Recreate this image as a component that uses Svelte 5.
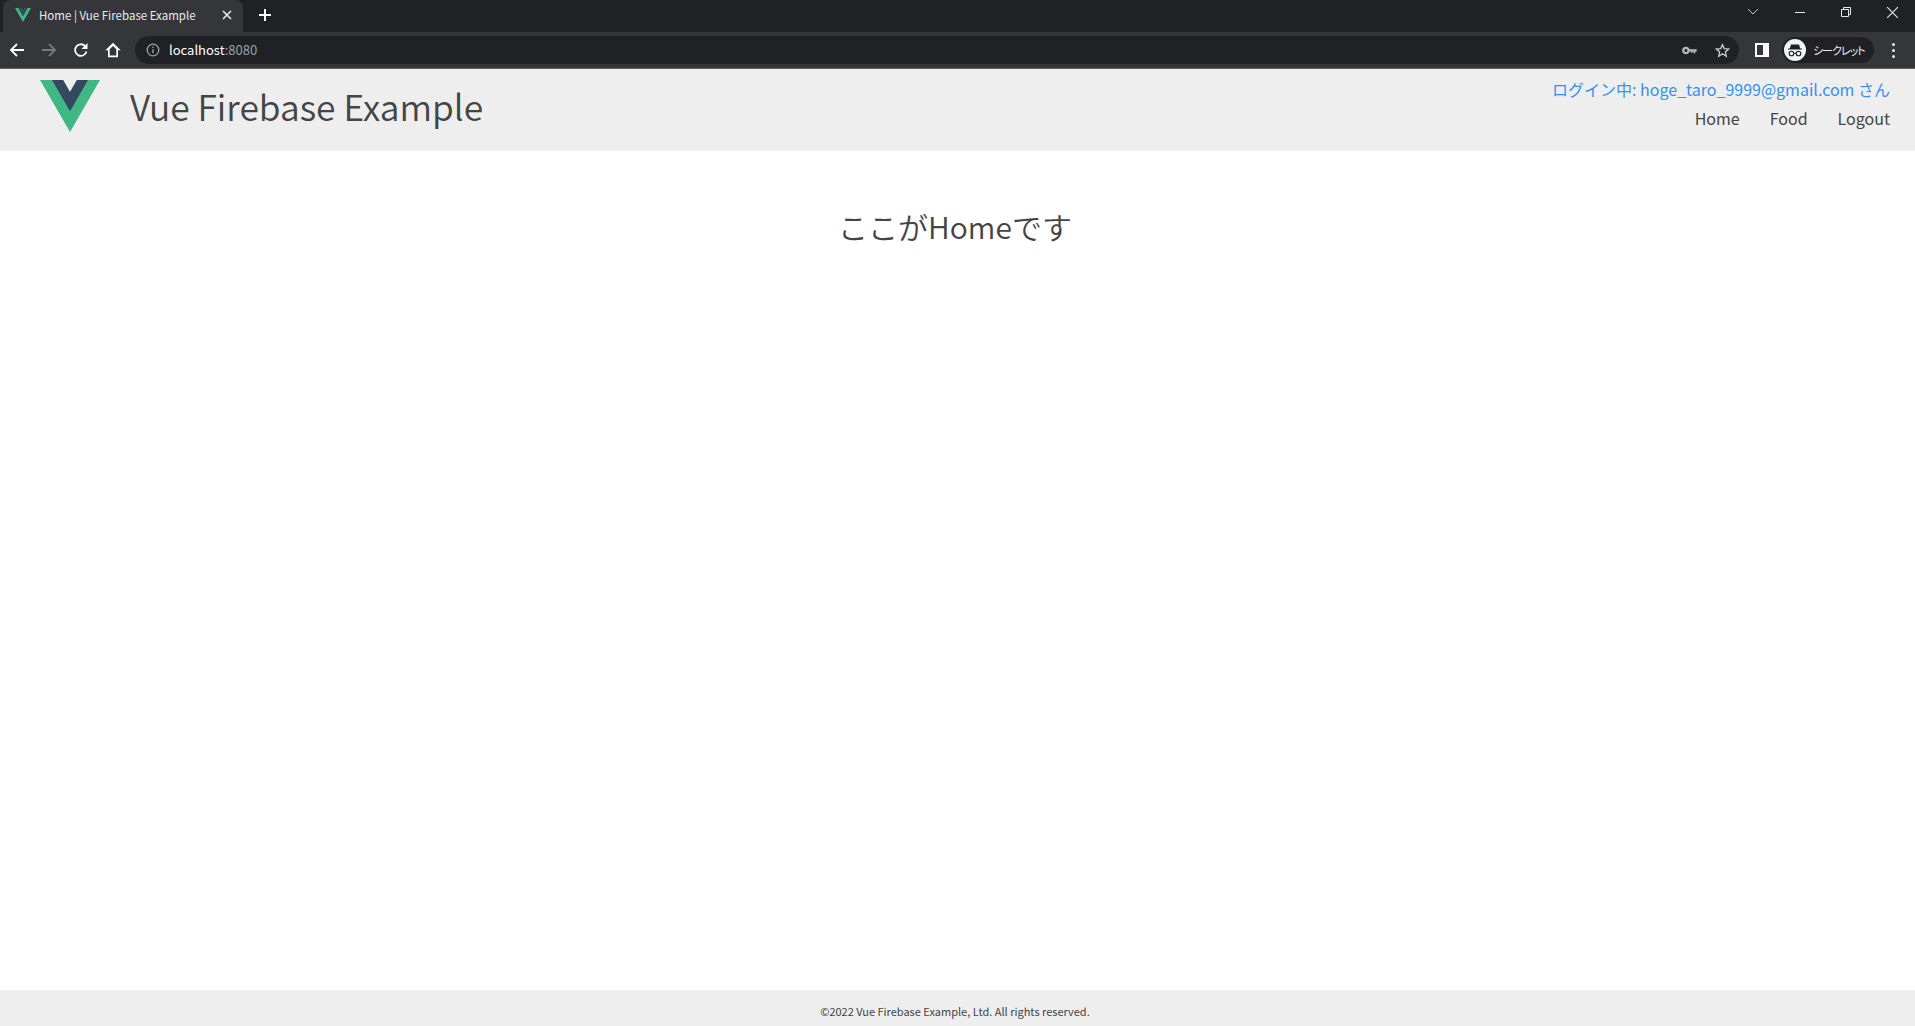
<script>
  const links = ["Home", "Food", "Logout"];
  const userEmail = "hoge_taro_9999@gmail.com";
</script>

<div class="page">
  <!-- browser chrome -->
  <div class="tabstrip">
    <div class="tab">
      <svg class="favicon" viewBox="0 0 261.76 226.69" width="16" height="14">
        <path fill="#41b883" d="M161.096.001l-30.225 52.351L100.647.001H-.005l130.877 226.688L261.749.001z" />
        <path fill="#34495e" d="M161.096.001l-30.225 52.351L100.647.001H52.346l78.526 136.01L209.398.001z" />
      </svg>
      <span class="tab-title">Home | Vue Firebase Example</span>
      <svg class="tab-close" viewBox="0 0 10 10" width="10" height="10">
        <path d="M1 1l8 8M9 1l-8 8" stroke="#e8eaed" stroke-width="1.6" fill="none" />
      </svg>
    </div>
    <svg class="newtab" viewBox="0 0 12 12" width="12" height="12">
      <path d="M6 0v12M0 6h12" stroke="#fff" stroke-width="2" fill="none" />
    </svg>
    <div class="winbtns">
      <svg viewBox="0 0 12 8" width="12" height="8"><path d="M1 1l5 5 5-5" stroke="#c4c7c9" fill="none" /></svg>
      <svg viewBox="0 0 10 10" width="10" height="10"><path d="M0 5.5h10" stroke="#e8eaed" fill="none" /></svg>
      <svg viewBox="0 0 10 10" width="10" height="10"><path d="M.5 2.5h7v7h-7zM2.5 2.5v-2h7v7h-2" stroke="#e8eaed" fill="none" /></svg>
      <svg viewBox="0 0 10 10" width="11" height="11"><path d="M0 0l10 10M10 0L0 10" stroke="#e8eaed" stroke-width="1" fill="none" /></svg>
    </div>
  </div>
  <div class="toolbar">
    <div class="navbtns">
      <svg viewBox="0 0 16 16" width="16" height="16"><path d="M15 8H2M8 2L2 8l6 6" stroke="#fff" stroke-width="1.8" fill="none" /></svg>
      <svg viewBox="0 0 16 16" width="16" height="16"><path d="M1 8h13M8 2l6 6-6 6" stroke="#77797c" stroke-width="1.8" fill="none" /></svg>
      <svg viewBox="0 0 16 16" width="16" height="16"><path d="M13.5 9.5A5.8 5.8 0 1 1 12 4" stroke="#fff" stroke-width="1.8" fill="none" /><path d="M14.5 1v6h-6z" fill="#fff" /></svg>
      <svg viewBox="0 0 16 16" width="16" height="16"><path d="M8 .8L.3 8.300h2.700v6.900h10V8.300h2.700zM4.700 13.500V7.300L8 4.100l3.300 3.200v6.200z" fill="#fff" fill-rule="evenodd" /></svg>
    </div>
    <div class="omnibox">
      <svg class="info" viewBox="0 0 14 14" width="14" height="14">
        <circle cx="7" cy="7" r="5.8" stroke="#9aa0a6" stroke-width="1.3" fill="none" />
        <path d="M7 6.2v4M7 3.6v1.5" stroke="#9aa0a6" stroke-width="1.4" fill="none" />
      </svg>
      <span class="url">localhost<span class="port">:8080</span></span>
      <span class="omni-space"></span>
      <svg viewBox="0 0 16 10" width="15" height="9"><circle cx="4" cy="5" r="3" stroke="#b4b6b8" stroke-width="2.6" fill="none" /><path d="M7 3.500h9v2.500H14.500v2h-2V6h-1v1.500h-2V6H7z" fill="#b4b6b8" /></svg>
      <svg class="star" viewBox="0 0 16 16" width="15" height="15"><path d="M8 1.8l1.9 4.2 4.6.5-3.4 3.1.9 4.5L8 11.4l-4 2.7.9-4.5L1.500 6.500l4.600-.5z" stroke="#c7c9cb" stroke-width="1.4" fill="none" /></svg>
    </div>
    <svg class="sidepanel" viewBox="0 0 14 14" width="14" height="14"><path d="M0 0h14v14H0zM2 2v10h6V2z" fill="#fff" fill-rule="evenodd" /></svg>
    <div class="profile">
      <svg viewBox="0 0 22 22" width="22" height="22">
        <circle cx="11" cy="11" r="11" fill="#f1f3f4" />
        <path d="M7 5.500h8l1.200 4H18v1H4v-1h1.800z" fill="#202124" />
        <circle cx="7.500" cy="14.500" r="2.300" stroke="#202124" stroke-width="1.100" fill="none" />
        <circle cx="14.500" cy="14.500" r="2.300" stroke="#202124" stroke-width="1.100" fill="none" />
        <path d="M9.800 14.300h2.400" stroke="#202124" fill="none" />
      </svg>
      <span>シークレット</span>
    </div>
    <div class="dots"><i></i><i></i><i></i></div>
  </div>

  <header class="header">
    <div class="brand">
      <svg class="logo" viewBox="0 0 261.76 226.69" width="60" height="52">
        <path fill="#41b883" d="M161.096.001l-30.225 52.351L100.647.001H-.005l130.877 226.688L261.749.001z" />
        <path fill="#34495e" d="M161.096.001l-30.225 52.351L100.647.001H52.346l78.526 136.01L209.398.001z" />
      </svg>
      <h1>Vue Firebase Example</h1>
    </div>
    <div class="side">
      <p class="login">ログイン中: {userEmail} さん</p>
      <nav>
        {#each links as link}
          <a href="#top">{link}</a>
        {/each}
      </nav>
    </div>
  </header>

  <main class="content">
    <h2>ここがHomeです</h2>
  </main>

  <footer class="footer">©2022 Vue Firebase Example, Ltd. All rights reserved.</footer>
</div>

<style>
  :global(body) {
    margin: 0;
    background: #fff;
  }
  .page {
    display: flex;
    flex-direction: column;
    height: 1026px;
    overflow: hidden;
    font-family: "Noto Sans CJK JP", "Noto Sans", sans-serif;
    color: #444;
  }
  .tabstrip {
    display: flex;
    align-items: center;
    height: 32px;
    background: #202124;
    flex: none;
  }
  .tab {
    display: flex;
    align-items: center;
    width: 240px;
    height: 32px;
    margin-left: 3px;
    padding: 0 11px 2px 12px;
    box-sizing: border-box;
    background: #35363a;
    border-radius: 8px 8px 0 0;
  }
  .favicon {
    flex: none;
  }
  .tab-title {
    margin-left: 8px;
    font-size: 11.5px;
    color: #e8eaed;
    white-space: nowrap;
    flex: 1;
  }
  .newtab {
    margin: 0 0 2px 16px;
  }
  .winbtns {
    margin-left: auto;
    display: flex;
    align-items: center;
    gap: 36px;
    padding: 0 17px 8px 0;
  }
  .toolbar {
    display: flex;
    align-items: center;
    height: 36px;
    background: #35363a;
    border-bottom: 1px solid #5f6063;
    flex: none;
  }
  .navbtns {
    display: flex;
    align-items: center;
    gap: 16px;
    margin-left: 9px;
  }
  .omnibox {
    display: flex;
    align-items: center;
    width: 1604px;
    height: 28px;
    margin-left: 14px;
    padding: 0 9px 0 11px;
    box-sizing: border-box;
    background: #202124;
    border-radius: 14px;
    flex: none;
  }
  .url {
    margin-left: 9px;
    font-size: 13px;
    line-height: 26px;
    color: #fff;
  }
  .port {
    color: #9aa0a6;
  }
  .omni-space {
    flex: 1;
  }
  .star {
    margin-left: 18px;
  }
  .sidepanel {
    margin-left: 16px;
    flex: none;
  }
  .profile {
    display: flex;
    align-items: center;
    gap: 7px;
    width: 92px;
    height: 26px;
    margin-left: 13px;
    padding-left: 2px;
    box-sizing: border-box;
    background: #202124;
    border-radius: 13px;
    font-size: 11px;
    font-feature-settings: "palt";
    letter-spacing: -1px;
    color: #e8eaed;
    white-space: nowrap;
    flex: none;
  }
  .profile svg {
    flex: none;
  }
  .dots {
    display: flex;
    flex-direction: column;
    gap: 3px;
    margin-left: 18px;
  }
  .dots i {
    width: 3px;
    height: 3px;
    border-radius: 50%;
    background: #e8eaed;
  }
  .header {
    display: flex;
    justify-content: space-between;
    height: 82px;
    padding: 0 25px 0 40px;
    background: #eee;
    flex: none;
  }
  .brand {
    display: flex;
    align-items: flex-start;
  }
  .logo {
    margin-top: 11px;
  }
  h1 {
    margin: 11px 0 0 30px;
    font-size: 35.4px;
    font-weight: 350;
    line-height: 52px;
    white-space: nowrap;
  }
  .side {
    display: flex;
    flex-direction: column;
    align-items: flex-end;
    padding-top: 8px;
  }
  .login {
    margin: 0;
    font-size: 16px;
    line-height: 24px;
    color: #3490f5;
  }
  nav {
    display: flex;
    gap: 30px;
    margin-top: 5px;
  }
  nav a {
    font-size: 16px;
    line-height: 24px;
    color: #444;
    text-decoration: none;
  }
  .content {
    flex: 1;
    padding-right: 5px;
    text-align: center;
  }
  h2 {
    margin: 52px 0 0;
    font-size: 30px;
    font-weight: 350;
    line-height: 46px;
  }
  .footer {
    height: 36px;
    padding-right: 5px;
    line-height: 43px;
    background: #eee;
    text-align: center;
    font-size: 11px;
    flex: none;
  }
</style>
